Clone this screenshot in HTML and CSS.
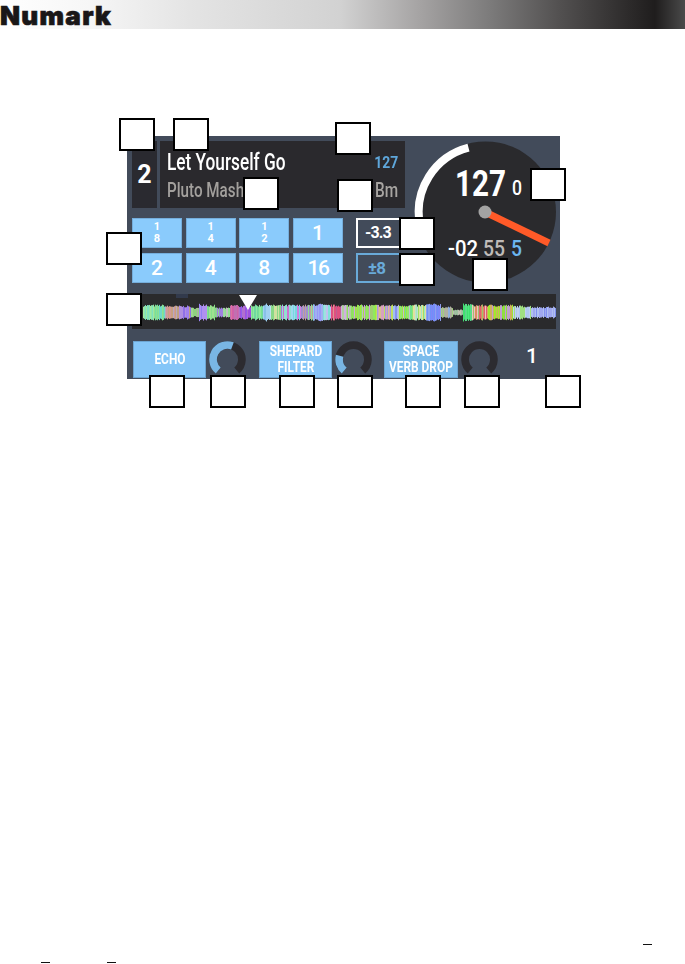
FILE: index.html
```html
<!DOCTYPE html>
<html lang="en">
<head>
<meta charset="utf-8">
<title>Numark screen overview</title>
<link rel="stylesheet" href="styles.css">
</head>
<body>
<div class="page">
  <header class="brand"><span class="logo">Numark</span></header>

  <section class="panel">
    <div class="upper">
      <div class="left">
        <div class="info">
          <div class="deck">2</div>
          <div class="track">
            <div class="track-line"><span class="title">Let Yourself Go</span><span class="bpm">127</span></div>
            <div class="track-line"><span class="artist">Pluto Mash</span><span class="key">Bm</span></div>
          </div>
        </div>
        <div class="controls">
          <div class="pads">
            <div class="pad"><span class="frac">1<br>8</span></div>
            <div class="pad"><span class="frac">1<br>4</span></div>
            <div class="pad"><span class="frac">1<br>2</span></div>
            <div class="pad">1</div>
            <div class="pad">2</div>
            <div class="pad">4</div>
            <div class="pad">8</div>
            <div class="pad pad-wide">16</div>
          </div>
          <div class="pitch">
            <div class="pitch-box pitch-now">-3.3</div>
            <div class="pitch-box pitch-range">±8</div>
          </div>
        </div>
      </div>
      <svg class="dial" viewBox="0 0 143 143" width="143" height="143">
        <circle cx="71.5" cy="71" r="70.5" fill="#2a2a2d"/>
        <path d="M6 84A66.5 66.5 0 0 1 54.5 6.7" fill="none" stroke="#fff" stroke-width="8"/>
        <line x1="71" y1="71" x2="135" y2="102" stroke="#ff5a28" stroke-width="7"/>
        <circle cx="71" cy="71" r="6.5" fill="#a3a3a3"/>
        <text class="dial-big" transform="translate(41 55) scale(.8 1)">127</text>
        <text class="dial-small" x="98" y="54" textLength="10" lengthAdjust="spacingAndGlyphs">0</text>
        <text class="dial-time" x="34" y="115" textLength="30" lengthAdjust="spacingAndGlyphs">-02</text>
        <text class="dial-time dial-grey" x="69" y="115" textLength="22" lengthAdjust="spacingAndGlyphs">55</text>
        <text class="dial-time dial-blue" x="97" y="115" textLength="11" lengthAdjust="spacingAndGlyphs">5</text>
      </svg>
    </div>

    <div class="wave">
      <svg id="wave" class="wave-svg" viewBox="0 0 424 35" width="424" height="35"></svg>
      <span class="wave-mark"></span>
      <span class="playhead"></span>
    </div>

    <div class="fx">
      <div class="fx-btn"><span class="fx-label">ECHO</span></div>
      <svg class="knob" viewBox="0 0 36 36" width="37" height="37">
        <path class="knob-dark" d="M9 28.7A14 14 0 1 1 27 28.7"/>
        <path class="knob-blue" d="M9 28.7A14 14 0 0 1 22.8 4.8"/>
      </svg>
      <div class="fx-btn fx-second"><span class="fx-label">SHEPARD<br>FILTER</span></div>
      <svg class="knob" viewBox="0 0 36 36" width="37" height="37">
        <path class="knob-dark" d="M9 28.7A14 14 0 1 1 27 28.7"/>
        <path class="knob-blue" d="M9 28.7A14 14 0 0 1 4.5 14.4"/>
      </svg>
      <div class="fx-btn fx-third"><span class="fx-label">SPACE<br>VERB DROP</span></div>
      <svg class="knob" viewBox="0 0 36 36" width="37" height="37">
        <path class="knob-dark" d="M9 28.7A14 14 0 1 1 27 28.7"/>
      </svg>
      <div class="fx-num">1</div>
    </div>
  </section>

  <div class="marks">
    <div class="marks-top"><span class="dash"></span></div>
    <div class="marks-bottom"><span class="dash"></span><span class="dash"></span></div>
  </div>

  <span class="callout c1"></span>
  <span class="callout c2"></span>
  <span class="callout c3"></span>
  <span class="callout c4"></span>
  <span class="callout c5"></span>
  <span class="callout c6"></span>
  <span class="callout c7"></span>
  <span class="callout c8"></span>
  <span class="callout c9"></span>
  <span class="callout c10"></span>
  <span class="callout c11"></span>
  <span class="callout c12"></span>
  <span class="callout c13"></span>
  <span class="callout c14"></span>
  <span class="callout c15"></span>
  <span class="callout c16"></span>
  <span class="callout c17"></span>
  <span class="callout c18"></span>
</div>
<script src="waveform.js"></script>
</body>
</html>
```

FILE: styles.css
```css
* { box-sizing: border-box; }
html, body { margin: 0; padding: 0; background: #fff; }
body { overflow: hidden; font-family: "Roboto", "Liberation Sans", sans-serif; }

.page { position: relative; width: 685px; height: 964px; overflow: hidden; }

.brand {
  height: 29px;
  padding-top: 3px;
  background: linear-gradient(90deg, #fff 0, #f6f6f6 90px, #e4e4e4 190px, #d2d2d2 340px, #a5a3a3 420px, #7c7b7b 490px, #525050 560px, #2c2a2a 630px, #1f1d1d 655px, #4a4a4a 685px);
}
.logo {
  display: block;
  font-family: "Inter", "Liberation Sans", sans-serif;
  font-weight: 900;
  font-size: 26px;
  line-height: 26px;
  letter-spacing: 1.3px;
  color: #1a1718;
  -webkit-text-stroke: 0.7px #1a1718;
}

.panel {
  width: 433px;
  height: 243px;
  margin: 107px 0 0 127px;
  padding: 5px 0 0 5px;
  background: #424b5a;
}

.upper { display: flex; gap: 9px; }
.left { width: 273px; display: flex; flex-direction: column; gap: 10px; }

.info { display: flex; gap: 3px; height: 67px; }
.deck {
  width: 25px;
  background: #2a2a30;
  color: #fff;
  font-weight: 700;
  font-size: 25px;
  line-height: 67px;
  text-align: center;
}
.track {
  flex: 1;
  background: #2a292d;
  padding: 10px 7px 0 7px;
  display: flex;
  flex-direction: column;
  gap: 5px;
}
.track-line { display: flex; justify-content: space-between; align-items: flex-end; height: 23px; }
.title, .artist, .bpm, .key { display: inline-block; white-space: nowrap; line-height: 23px; font-weight: 500; }
.title { color: #fff; font-size: 23px; transform: scaleX(.75); transform-origin: left center; }
.artist { color: #a3a09d; font-size: 20px; transform: scaleX(.76); transform-origin: left center; }
.bpm { color: #5ea6da; font-size: 17px; font-weight: 700; align-self: flex-start; transform: scaleX(.82); transform-origin: right center; }
.key { color: #a8a5a2; font-size: 20px; transform: scaleX(.77); transform-origin: right center; }

.controls { display: flex; gap: 13px; height: 65px; }
.pads {
  width: 211px;
  display: grid;
  grid-template-columns: repeat(4, 50px);
  grid-template-rows: 30px 30px;
  column-gap: 3.67px;
  row-gap: 5px;
}
.pad {
  background: #8acbfc;
  color: #fff;
  font-weight: 500;
  font-size: 21px;
  line-height: 28px;
  text-align: center;
  border: 1px solid #75aedc;
}
.pad-wide { letter-spacing: -1.5px; }
.frac { display: block; font-size: 11px; line-height: 12px; font-weight: 700; padding-top: 2px; }

.pitch { width: 49px; display: flex; flex-direction: column; gap: 5px; }
.pitch-box {
  height: 30px;
  border: 2px solid #fff;
  color: #fff;
  font-weight: 700;
  font-size: 16px;
  line-height: 26px;
  padding-left: 7px;
  letter-spacing: -0.9px;
}
.pitch-range { border-color: #69aad9; color: #69aad9; padding-left: 10px; font-size: 17px; }

.dial { display: block; }
.dial-big { font: 700 37px "Roboto", sans-serif; fill: #fff; }
.dial-small { font: 500 21px "Roboto", sans-serif; fill: #fff; }
.dial-time { font: 500 22px "Roboto", sans-serif; fill: #fff; }
.dial-grey { fill: #bfbbb8; }
.dial-blue { fill: #6cb6f0; }

.wave { position: relative; width: 424px; height: 35px; margin-top: 10px; background: #2a2a2c; }
.wave-svg { display: block; filter: blur(0.45px); }
.wave-mark { position: absolute; left: 44px; top: 0; width: 12px; height: 4px; background: #323a4c; }
.playhead {
  position: absolute;
  left: 107px;
  top: 1px;
  width: 0;
  height: 0;
  border-left: 9.5px solid transparent;
  border-right: 9.5px solid transparent;
  border-top: 15px solid #fff;
}

.fx { display: flex; margin: 12px 0 0 1px; height: 37px; }
.fx-btn {
  flex: none;
  width: 73px;
  height: 37px;
  padding-top: 1px;
  background: #85c6f8;
  border: 1px solid #6da5d2;
  color: #fff;
  display: flex;
  align-items: center;
  justify-content: center;
}
.fx-label {
  display: block;
  white-space: nowrap;
  font-weight: 700;
  font-size: 14.5px;
  line-height: 16px;
  text-align: center;
  transform: scaleX(.82);
}
.fx-third { width: 74px; background: #7cbcec; }
.knob { display: block; margin-left: 3px; flex: none; }
.knob + .fx-second { margin-left: 13px; }
.knob + .fx-third { margin-left: 12px; }
.knob-dark { fill: none; stroke: #2c2b30; stroke-width: 7.5; }
.knob-blue { fill: none; stroke: #79b6e4; stroke-width: 7.5; }
.fx-num { margin-left: 28px; color: #fff; font-size: 21px; font-weight: 500; line-height: 30px; width: 12px; text-align: center; }

.marks { margin-top: 565px; }
.marks-top { display: flex; justify-content: flex-end; padding-right: 33px; height: 18px; }
.marks-bottom { display: flex; gap: 57px; padding-left: 41px; }
.dash { display: block; width: 9px; height: 1px; background: #111; }

.callout {
  position: absolute;
  width: 36px;
  height: 33px;
  background: #fff;
  border: 2px solid #000;
}
.c1 { left: 119px; top: 118px; }
.c2 { left: 173px; top: 118px; }
.c3 { left: 335px; top: 122px; }
.c4 { left: 243px; top: 177px; }
.c5 { left: 337px; top: 179px; }
.c6 { left: 106px; top: 232px; }
.c7 { left: 399px; top: 217px; }
.c8 { left: 399px; top: 253px; }
.c9 { left: 530px; top: 168px; }
.c10 { left: 472px; top: 258px; }
.c11 { left: 106px; top: 293px; }
.c12 { left: 149px; top: 375px; }
.c13 { left: 210px; top: 375px; }
.c14 { left: 279px; top: 375px; }
.c15 { left: 337px; top: 375px; }
.c16 { left: 405px; top: 375px; }
.c17 { left: 464px; top: 375px; }
.c18 { left: 545px; top: 375px; }
```

FILE: waveform.js
```js
(function () {
  var svg = document.getElementById('wave');
  var NS = 'http://www.w3.org/2000/svg';
  // [end x on page, amplitude, colours]
  var regions = [
    [153, 8, ['#8fe6a8', '#7fe0c0', '#a0e8a0']],
    [164, 8, ['#70d8c8', '#90e090', '#78e0a0']],
    [176, 7, ['#d09a98', '#c8a080', '#b8a8c0', '#e09090']],
    [190, 7, ['#a080f0', '#b090e0', '#c0a080', '#9070e8']],
    [198, 5, ['#90d080', '#b0b0a0', '#a0d890']],
    [206, 9, ['#a088f8', '#9080f0', '#b090f0']],
    [214, 8, ['#88e088', '#70d890', '#a0e090']],
    [222, 5, ['#a0a0d0', '#a080e0', '#90d090']],
    [229, 5, ['#90e090', '#a0d8a0', '#c0c0c0']],
    [238, 8, ['#d060a8', '#c070b0', '#e070a0']],
    [250, 7, ['#a050e0', '#9060e8', '#b070d0']],
    [262, 8, ['#78e090', '#70d8a0', '#90e8a0']],
    [270, 9, ['#a0d0f0', '#88c0e8', '#c0e0f0']],
    [280, 8, ['#a0e088', '#d0e0a0', '#88d888']],
    [290, 8, ['#d070d0', '#b070e0', '#90e0d0']],
    [300, 8, ['#78d8e0', '#a0d8f0', '#d080e0']],
    [312, 8, ['#a090d0', '#90e090', '#c0a0a0']],
    [322, 9, ['#9898f8', '#a0b0f0', '#88d8e0']],
    [330, 8, ['#80e0d8', '#a0e0e0', '#c0c0f0']],
    [340, 8, ['#e05080', '#c06090', '#e09090']],
    [352, 8, ['#90e060', '#b0d0a0', '#d0b0e0']],
    [375, 8, ['#a0e840', '#90e860', '#c0c0c0', '#d0a0e0', '#a0d070']],
    [392, 8, ['#d8c090', '#a0a0e0', '#c0e060', '#d8a0c0']],
    [397, 8, ['#8890f0', '#a0c0f0']],
    [412, 8, ['#90e870', '#a0e840', '#c0c0d0', '#70e090']],
    [425, 8, ['#a0e8c0', '#c0e0d0', '#e0e0a0', '#a0e060']],
    [440, 9, ['#7090f8', '#8088f8', '#90a0f0']],
    [452, 6, ['#a0d080', '#b0b0a0', '#90b0e0']],
    [462, 3, ['#a0c0a0', '#c0c0b0']],
    [471, 9, ['#50e880', '#40e070', '#60d090']],
    [486, 8, ['#e06070', '#d89060', '#a0c070', '#f0c0c0']],
    [512, 8, ['#a0e830', '#90e040', '#d0b060', '#c0a0d0']],
    [530, 7, ['#b0c8f0', '#c0d0f0', '#a0e080']],
    [556, 6, ['#a0a8f0', '#b0c0f0', '#8090f0']]
  ];
  var seed = 7;
  function rnd() {
    seed = (seed * 16807) % 2147483647;
    return seed / 2147483647;
  }
  var left = 132, r = 0;
  for (var px = 143; px < 556; px++) {
    while (regions[r][0] < px) r++;
    var reg = regions[r];
    var amp = reg[1] * (0.72 + 0.28 * rnd());
    var line = document.createElementNS(NS, 'line');
    var x = px - left + 0.5;
    line.setAttribute('x1', x);
    line.setAttribute('x2', x);
    line.setAttribute('y1', 18.5 - amp);
    line.setAttribute('y2', 18.5 + amp);
    line.setAttribute('stroke', reg[2][Math.floor(rnd() * reg[2].length)]);
    svg.appendChild(line);
  }
})();
```
